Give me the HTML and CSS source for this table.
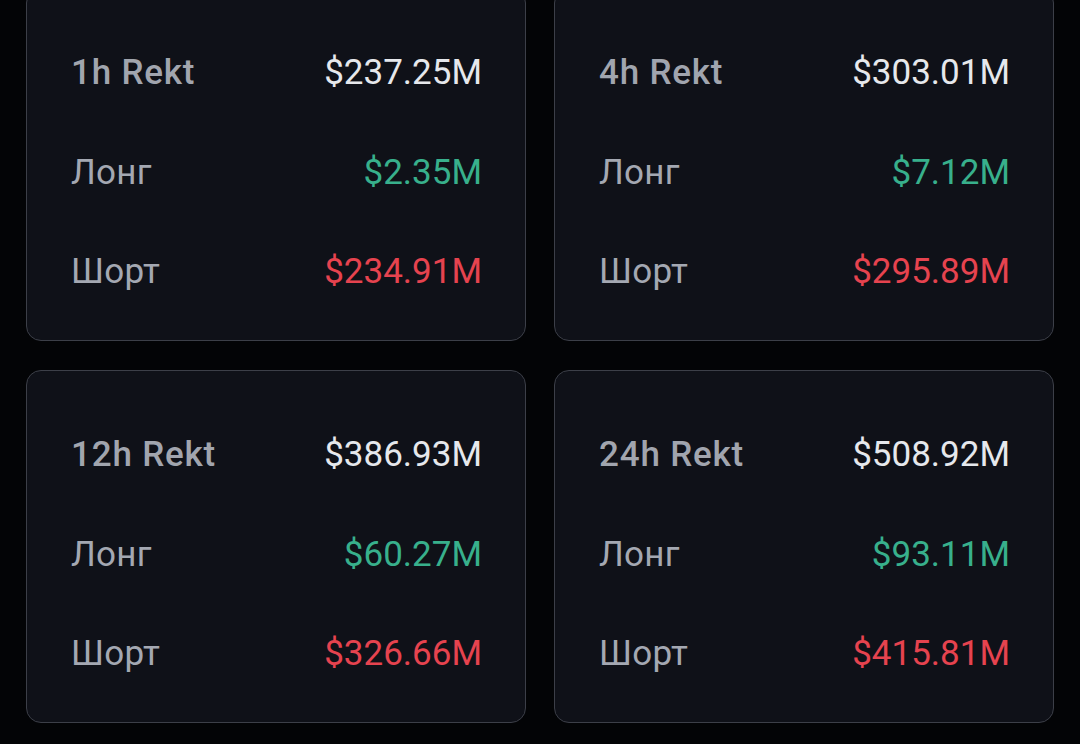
FILE: index.html
```
<!DOCTYPE html>
<html>
<head>
    <meta charset="utf-8">
    <link rel="stylesheet" href="styles.css">
</head>
<body>
    <div class="grid">
        <div class="card">
            <div class="row"><span class="title">1h Rekt</span><span class="total">$237.25M</span></div>
            <div class="row"><span class="label">Лонг</span><span class="long">$2.35M</span></div>
            <div class="row"><span class="label">Шорт</span><span class="short">$234.91M</span></div>
        </div>
        <div class="card">
            <div class="row"><span class="title">4h Rekt</span><span class="total">$303.01M</span></div>
            <div class="row"><span class="label">Лонг</span><span class="long">$7.12M</span></div>
            <div class="row"><span class="label">Шорт</span><span class="short">$295.89M</span></div>
        </div>
        <div class="card">
            <div class="row"><span class="title">12h Rekt</span><span class="total">$386.93M</span></div>
            <div class="row"><span class="label">Лонг</span><span class="long">$60.27M</span></div>
            <div class="row"><span class="label">Шорт</span><span class="short">$326.66M</span></div>
        </div>
        <div class="card">
            <div class="row"><span class="title">24h Rekt</span><span class="total">$508.92M</span></div>
            <div class="row"><span class="label">Лонг</span><span class="long">$93.11M</span></div>
            <div class="row"><span class="label">Шорт</span><span class="short">$415.81M</span></div>
        </div>
    </div>
</body>
</html>
```
FILE: styles.css
```
html, body
{
    margin: 0;
    padding: 0;
    background-color: #030406;
    height: 100%;
    overflow: hidden;
}
body
{
    font-family: Roboto, "Noto Sans", sans-serif;
}
.grid
{
    display: grid;
    grid-template-columns: 500px 500px;
    column-gap: 28px;
    row-gap: 29px;
    margin-top: -12px;
    padding-left: 26px;
}
.card
{
    box-sizing: border-box;
    height: 353px;
    background-color: #0f1118;
    border: 1px solid #3c3f48;
    border-radius: 15px;
    padding: 34px 43px 0 44px;
}
.row
{
    height: 99.5px;
    display: flex;
    align-items: center;
    justify-content: space-between;
    font-size: 35px;
}
.title
{
    color: #a1a5ae;
    font-weight: 500;
    letter-spacing: 0.8px;
}
.label
{
    color: #a4a8b2;
    letter-spacing: 0.3px;
}
.total
{
    color: #e6e8ec;
}
.long
{
    color: #38b08c;
}
.short
{
    color: #e6434f;
}
```
